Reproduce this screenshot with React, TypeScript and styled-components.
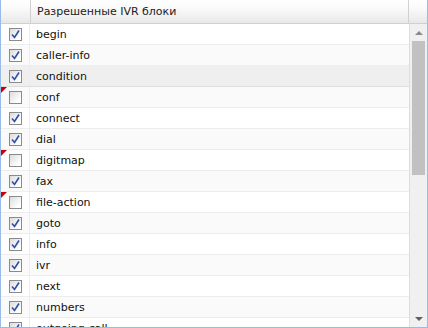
import React from 'react';
import styled, { createGlobalStyle } from 'styled-components';

const GlobalStyle = createGlobalStyle`
  html, body {
    margin: 0;
    padding: 0;
    background: #ffffff;
  }
  body {
    font-family: Tahoma, 'DejaVu Sans', Verdana, sans-serif;
    font-size: 11px;
  }
`;

const Panel = styled.div`
  width: 428px;
  height: 328px;
  box-sizing: border-box;
  border: 1px solid #99bbe8;
  border-top: none;
  display: flex;
  flex-direction: column;
  overflow: hidden;
  background: #ffffff;
`;

const Header = styled.div`
  display: flex;
  height: 24px;
  box-sizing: border-box;
  flex-shrink: 0;
  border-bottom: 1px solid #d0d0d0;
  background: linear-gradient(#ffffff, #f9f9f9 40%, #e8e8e8);
`;

const HeaderCell = styled.div<{ $width?: number }>`
  ${(p) => (p.$width ? `width: ${p.$width}px; flex-shrink: 0;` : 'flex: 1;')}
  box-sizing: border-box;
  border-right: 1px solid #d0d0d0;
  display: flex;
  align-items: center;
  padding-left: 6px;
  color: #222222;
  &:last-child {
    border-right: none;
  }
`;

const Body = styled.div`
  flex: 1;
  display: flex;
  min-height: 0;
`;

const Rows = styled.div`
  flex: 1;
  overflow: hidden;
`;

const Row = styled.div<{ $alt?: boolean; $selected?: boolean }>`
  display: flex;
  height: 21px;
  box-sizing: border-box;
  border-bottom: 1px solid #ededed;
  background: ${(p) => (p.$selected ? '#efefef' : p.$alt ? '#fafafa' : '#ffffff')};
  ${(p) => p.$selected && 'border-bottom-color: #dddddd;'}
`;

const CheckCell = styled.div<{ $dirty?: boolean }>`
  position: relative;
  width: 29px;
  flex-shrink: 0;
  box-sizing: border-box;
  border-right: 1px solid #ededed;
  display: flex;
  align-items: center;
  padding-left: 8px;
  &::before {
    content: '';
    display: ${(p) => (p.$dirty ? 'block' : 'none')};
    position: absolute;
    left: 0;
    top: 0;
    border-top: 6px solid #cc0000;
    border-right: 6px solid transparent;
  }
`;

const Box = styled.div`
  width: 13px;
  height: 13px;
  box-sizing: border-box;
  border: 1px solid #8a8a8a;
  background: linear-gradient(135deg, #dcdcdc, #ffffff 80%);
  display: flex;
  align-items: center;
  justify-content: center;
`;

const NameCell = styled.div`
  flex: 1;
  display: flex;
  align-items: center;
  padding-left: 6px;
  color: #111111;
  white-space: nowrap;
`;

const Scroller = styled.div`
  width: 18px;
  flex-shrink: 0;
  box-sizing: border-box;
  border-left: 1px solid #dddddd;
  background: #f0f0f0;
  display: flex;
  flex-direction: column;
  align-items: center;
  padding: 7px 0 0;
`;

const Arrow = styled.div<{ $down?: boolean }>`
  width: 0;
  height: 0;
  border-left: 4px solid transparent;
  border-right: 4px solid transparent;
  ${(p) => (p.$down ? 'border-top: 4px solid #606060;' : 'border-bottom: 4px solid #8a8a8a;')}
`;

const Thumb = styled.div`
  width: 13px;
  height: 134px;
  margin-top: 6px;
  background: #c1c1c1;
`;

const Track = styled.div`
  flex: 1;
  display: flex;
  align-items: flex-end;
  padding-bottom: 6px;
`;

const items: { name: string; checked: boolean }[] = [
  { name: 'begin', checked: true },
  { name: 'caller-info', checked: true },
  { name: 'condition', checked: true },
  { name: 'conf', checked: false },
  { name: 'connect', checked: true },
  { name: 'dial', checked: true },
  { name: 'digitmap', checked: false },
  { name: 'fax', checked: true },
  { name: 'file-action', checked: false },
  { name: 'goto', checked: true },
  { name: 'info', checked: true },
  { name: 'ivr', checked: true },
  { name: 'next', checked: true },
  { name: 'numbers', checked: true },
  { name: 'outgoing-call', checked: true },
];

const Check = () => (
  <svg width="9" height="9" viewBox="0 0 9 9">
    <path d="M1 4.5 L3.5 7.5 L8 0.5" fill="none" stroke="#2d4fa8" strokeWidth="1.6" />
  </svg>
);

const App: React.FC = () => (
  <>
    <GlobalStyle />
    <Panel>
      <Header>
        <HeaderCell $width={30} />
        <HeaderCell>Разрешенные IVR блоки</HeaderCell>
        <HeaderCell $width={18} />
      </Header>
      <Body>
        <Rows>
          {items.map((it, i) => (
            <Row key={it.name} $alt={i % 2 === 1} $selected={it.name === 'condition'}>
              <CheckCell $dirty={!it.checked}>
                <Box>{it.checked && <Check />}</Box>
              </CheckCell>
              <NameCell>{it.name}</NameCell>
            </Row>
          ))}
        </Rows>
        <Scroller>
          <Arrow />
          <Thumb />
          <Track>
            <Arrow $down />
          </Track>
        </Scroller>
      </Body>
    </Panel>
  </>
);

export default App;
